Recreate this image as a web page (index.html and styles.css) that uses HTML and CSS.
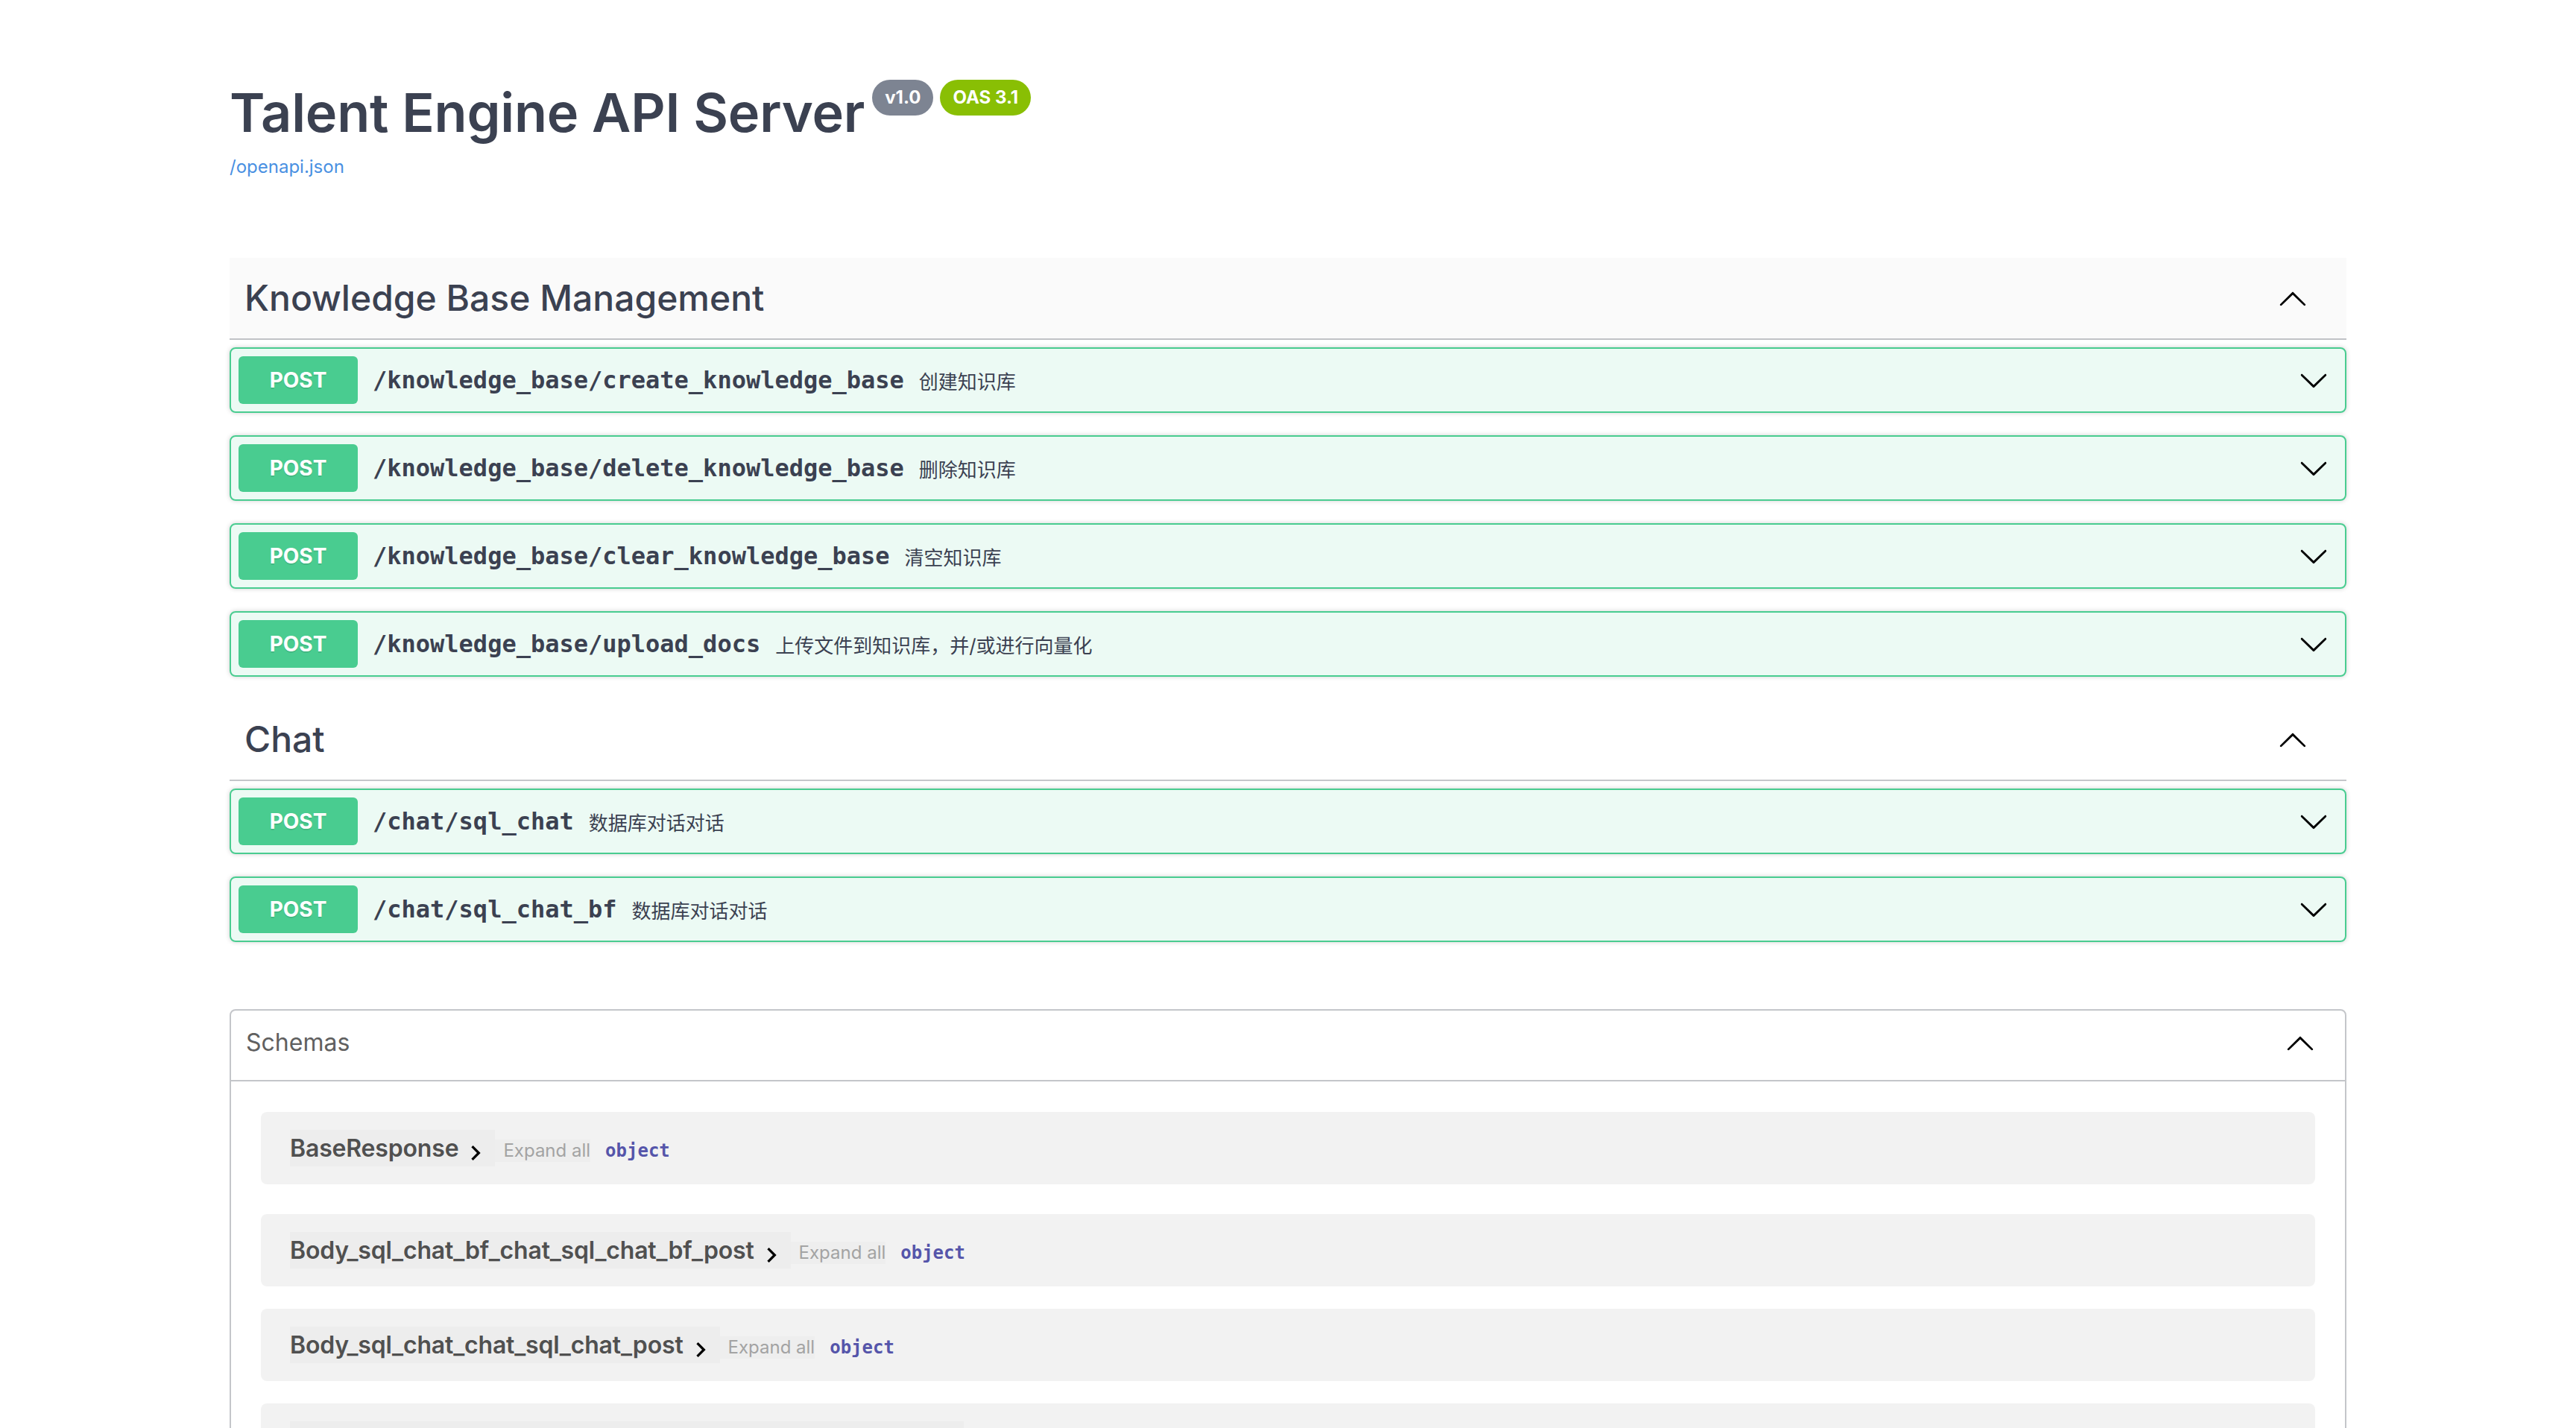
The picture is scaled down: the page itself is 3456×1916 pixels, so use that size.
FILE: index.html
```html
<!DOCTYPE html>
<html lang="zh-CN">
<head>
<meta charset="utf-8">
<title>Talent Engine API Server - Swagger UI</title>
<link rel="stylesheet" href="styles.css">
</head>
<body>
<svg class="defs" xmlns="http://www.w3.org/2000/svg" aria-hidden="true">
  <symbol id="large-arrow-up" viewBox="0 0 20 20"><path d="M17.418 14.908c.272.268.709.268.979 0s.271-.701 0-.969l-7.908-7.83c-.27-.268-.707-.268-.979 0l-7.908 7.83c-.27.268-.27.701 0 .969.271.268.709.268.979 0L10 7.767l7.418 7.141z"/></symbol>
  <symbol id="large-arrow-down" viewBox="0 0 20 20"><path d="M17.418 6.109c.272-.268.709-.268.979 0s.271.701 0 .969l-7.908 7.83c-.27.268-.707.268-.979 0l-7.908-7.830c-.27-.268-.27-.701 0-.969.271-.268.709-.268.979 0L10 13.25l7.418-7.141z"/></symbol>
  <symbol id="model-arrow" viewBox="0 0 24 24"><path d="M10 6 8.59 7.41 13.17 12l-4.58 4.59L10 18l6-6z"/></symbol>
</svg>

<div class="swagger-ui">
  <div class="wrapper">
    <section class="info">
      <h2 class="title">
        <span class="title-text">Talent Engine API Server</span>
        <span class="badges">
          <small class="badge">v1.0</small>
          <small class="badge badge-oas">OAS 3.1</small>
        </span>
      </h2>
      <div class="info-link-row"><a class="info-link" href="#">/openapi.json</a></div>
    </section>

    <div class="tag-section">
      <h3 class="tag tag-hover">
        <span class="tag-name">Knowledge Base Management</span>
        <svg class="tag-arrow"><use href="#large-arrow-up"/></svg>
      </h3>
      <div class="opblock">
        <span class="method">POST</span>
        <span class="path">/knowledge_base/create_knowledge_base</span>
        <span class="desc">创建知识库</span>
        <svg class="op-arrow"><use href="#large-arrow-down"/></svg>
      </div>
      <div class="opblock">
        <span class="method">POST</span>
        <span class="path">/knowledge_base/delete_knowledge_base</span>
        <span class="desc">删除知识库</span>
        <svg class="op-arrow"><use href="#large-arrow-down"/></svg>
      </div>
      <div class="opblock">
        <span class="method">POST</span>
        <span class="path">/knowledge_base/clear_knowledge_base</span>
        <span class="desc">清空知识库</span>
        <svg class="op-arrow"><use href="#large-arrow-down"/></svg>
      </div>
      <div class="opblock">
        <span class="method">POST</span>
        <span class="path">/knowledge_base/upload_docs</span>
        <span class="desc">上传文件到知识库，并/或进行向量化</span>
        <svg class="op-arrow"><use href="#large-arrow-down"/></svg>
      </div>
    </div>

    <div class="tag-section">
      <h3 class="tag">
        <span class="tag-name">Chat</span>
        <svg class="tag-arrow"><use href="#large-arrow-up"/></svg>
      </h3>
      <div class="opblock">
        <span class="method">POST</span>
        <span class="path">/chat/sql_chat</span>
        <span class="desc">数据库对话对话</span>
        <svg class="op-arrow"><use href="#large-arrow-down"/></svg>
      </div>
      <div class="opblock">
        <span class="method">POST</span>
        <span class="path">/chat/sql_chat_bf</span>
        <span class="desc">数据库对话对话</span>
        <svg class="op-arrow"><use href="#large-arrow-down"/></svg>
      </div>
    </div>

    <section class="models">
      <h4 class="models-head">
        <span class="models-title">Schemas</span>
        <svg class="models-arrow"><use href="#large-arrow-up"/></svg>
      </h4>
      <div class="model-container">
        <button class="model-toggle"><span class="model-title">BaseResponse</span><svg class="model-arrow"><use href="#model-arrow"/></svg></button>
        <button class="expand-all">Expand all</button>
        <span class="prop-type">object</span>
      </div>
      <div class="model-container">
        <button class="model-toggle"><span class="model-title">Body_sql_chat_bf_chat_sql_chat_bf_post</span><svg class="model-arrow"><use href="#model-arrow"/></svg></button>
        <button class="expand-all">Expand all</button>
        <span class="prop-type">object</span>
      </div>
      <div class="model-container">
        <button class="model-toggle"><span class="model-title">Body_sql_chat_chat_sql_chat_post</span><svg class="model-arrow"><use href="#model-arrow"/></svg></button>
        <button class="expand-all">Expand all</button>
        <span class="prop-type">object</span>
      </div>
      <div class="model-container">
        <button class="model-toggle"><span class="model-title">Body_upload_docs_knowledge_base_upload_docs_post</span><svg class="model-arrow"><use href="#model-arrow"/></svg></button>
        <button class="expand-all">Expand all</button>
        <span class="prop-type">object</span>
      </div>
    </section>
  </div>
</div>
</body>
</html>
```

FILE: styles.css
```css
* {
  box-sizing: border-box;
}

html,
body {
  margin: 0;
  padding: 0;
}

body {
  background: #ffffff;
  color: #3b4151;
  font-family: Inter, "Liberation Sans", "Noto Sans CJK SC", sans-serif;
}

.defs {
  position: absolute;
  width: 0;
  height: 0;
  overflow: hidden;
}

.wrapper {
  max-width: 2920px;
  margin: 0 auto;
  padding: 0 40px;
}

/* ---------- info ---------- */
.info {
  padding-top: 108px;
  margin-bottom: 105px;
}

.title {
  display: flex;
  align-items: flex-start;
  margin: 0;
  font-size: 72px;
  line-height: 86px;
  font-weight: 600;
  letter-spacing: -0.2px;
  color: #3b4151;
}

.badges {
  display: flex;
  gap: 9px;
  margin-left: 10px;
  margin-top: -1px;
  letter-spacing: 0;
}

.badge {
  display: block;
  height: 48px;
  line-height: 48px;
  padding: 0 17px;
  border-radius: 114px;
  background: #7d8492;
  color: #ffffff;
  font-size: 24px;
  font-weight: 700;
}

.badge-oas {
  background: #89bf04;
}

.info-link-row {
  margin-top: 15px;
  line-height: 30px;
}

.info-link {
  font-size: 24px;
  color: #4990e2;
  text-decoration: none;
}

/* ---------- tags ---------- */
.tag-section {
  display: flex;
  flex-direction: column;
}

.tag {
  display: flex;
  align-items: center;
  margin: 0 0 10px;
  padding: 20px 40px 20px 20px;
  border-bottom: 2px solid rgba(59, 65, 81, 0.3);
  font-size: 48px;
  line-height: 68px;
  font-weight: 500;
  color: #3b4151;
}

.tag-hover {
  background: rgba(0, 0, 0, 0.02);
}

.tag-name {
  flex: 1;
}

.tag-arrow {
  width: 40px;
  height: 40px;
  margin-right: 12px;
  fill: #000;
}

/* ---------- operations ---------- */
.opblock {
  display: flex;
  align-items: center;
  margin: 0 0 30px;
  padding: 10px;
  border: 2px solid #49cc90;
  border-radius: 8px;
  background: rgba(73, 204, 144, 0.1);
  box-shadow: 0 0 6px rgba(0, 0, 0, 0.19);
}

.method {
  min-width: 160px;
  height: 64px;
  line-height: 64px;
  border-radius: 6px;
  background: #49cc90;
  color: #ffffff;
  font-size: 28px;
  font-weight: 700;
  text-align: center;
  text-shadow: 0 2px 0 rgba(0, 0, 0, 0.1);
}

.path {
  padding: 0 20px;
  font-family: "DejaVu Sans Mono", "Liberation Mono", monospace;
  font-size: 32px;
  font-weight: 700;
  color: #3b4151;
}

.desc {
  flex: 1;
  font-family: Inter, "Noto Sans CJK SC", sans-serif;
  font-size: 26px;
  color: #3b4151;
}

.op-arrow {
  width: 40px;
  height: 40px;
  margin-right: 12px;
  fill: #000;
}

/* ---------- models ---------- */
.models {
  margin: 60px 0;
  padding: 0 0 40px;
  border: 2px solid rgba(59, 65, 81, 0.3);
  border-radius: 8px;
}

.models-head {
  display: flex;
  align-items: center;
  margin: 0;
  padding: 16px 40px 24px 20px;
  border-bottom: 2px solid rgba(59, 65, 81, 0.3);
  font-size: 32px;
  line-height: 53px;
  font-weight: 400;
  color: #606060;
}

.models-title {
  flex: 1;
}

.models-arrow {
  width: 40px;
  height: 40px;
  fill: #000;
}

.model-container {
  display: flex;
  align-items: baseline;
  margin: 0 40px 30px;
  padding: 24px 39px;
  border-radius: 8px;
  background: rgba(0, 0, 0, 0.05);
}

.model-container:first-of-type {
  margin: 41px 40px 40px;
}

.model-toggle {
  display: inline-flex;
  align-items: center;
  height: 49px;
  margin: 0;
  padding: 0 6px 0 0;
  border: 0;
  background: rgba(0, 0, 0, 0.02);
  font: inherit;
  cursor: pointer;
}

.model-title {
  font-family: Inter, "Liberation Sans", sans-serif;
  font-size: 32px;
  font-weight: 600;
  letter-spacing: -0.17px;
  color: #505050;
}

.model-arrow {
  width: 40px;
  height: 40px;
  margin: 13px 0 0 3px;
  fill: #000;
}

.expand-all {
  margin: 0 20px 0 0;
  padding: 0 0 0 11px;
  height: 30px;
  border: 0;
  background: rgba(0, 0, 0, 0.015);
  font-family: Inter, "Liberation Sans", sans-serif;
  font-size: 24px;
  color: #a3a3a3;
  cursor: pointer;
}

.prop-type {
  font-family: "DejaVu Sans Mono", "Liberation Mono", monospace;
  font-size: 24px;
  font-weight: 700;
  color: #55a;
}
```
